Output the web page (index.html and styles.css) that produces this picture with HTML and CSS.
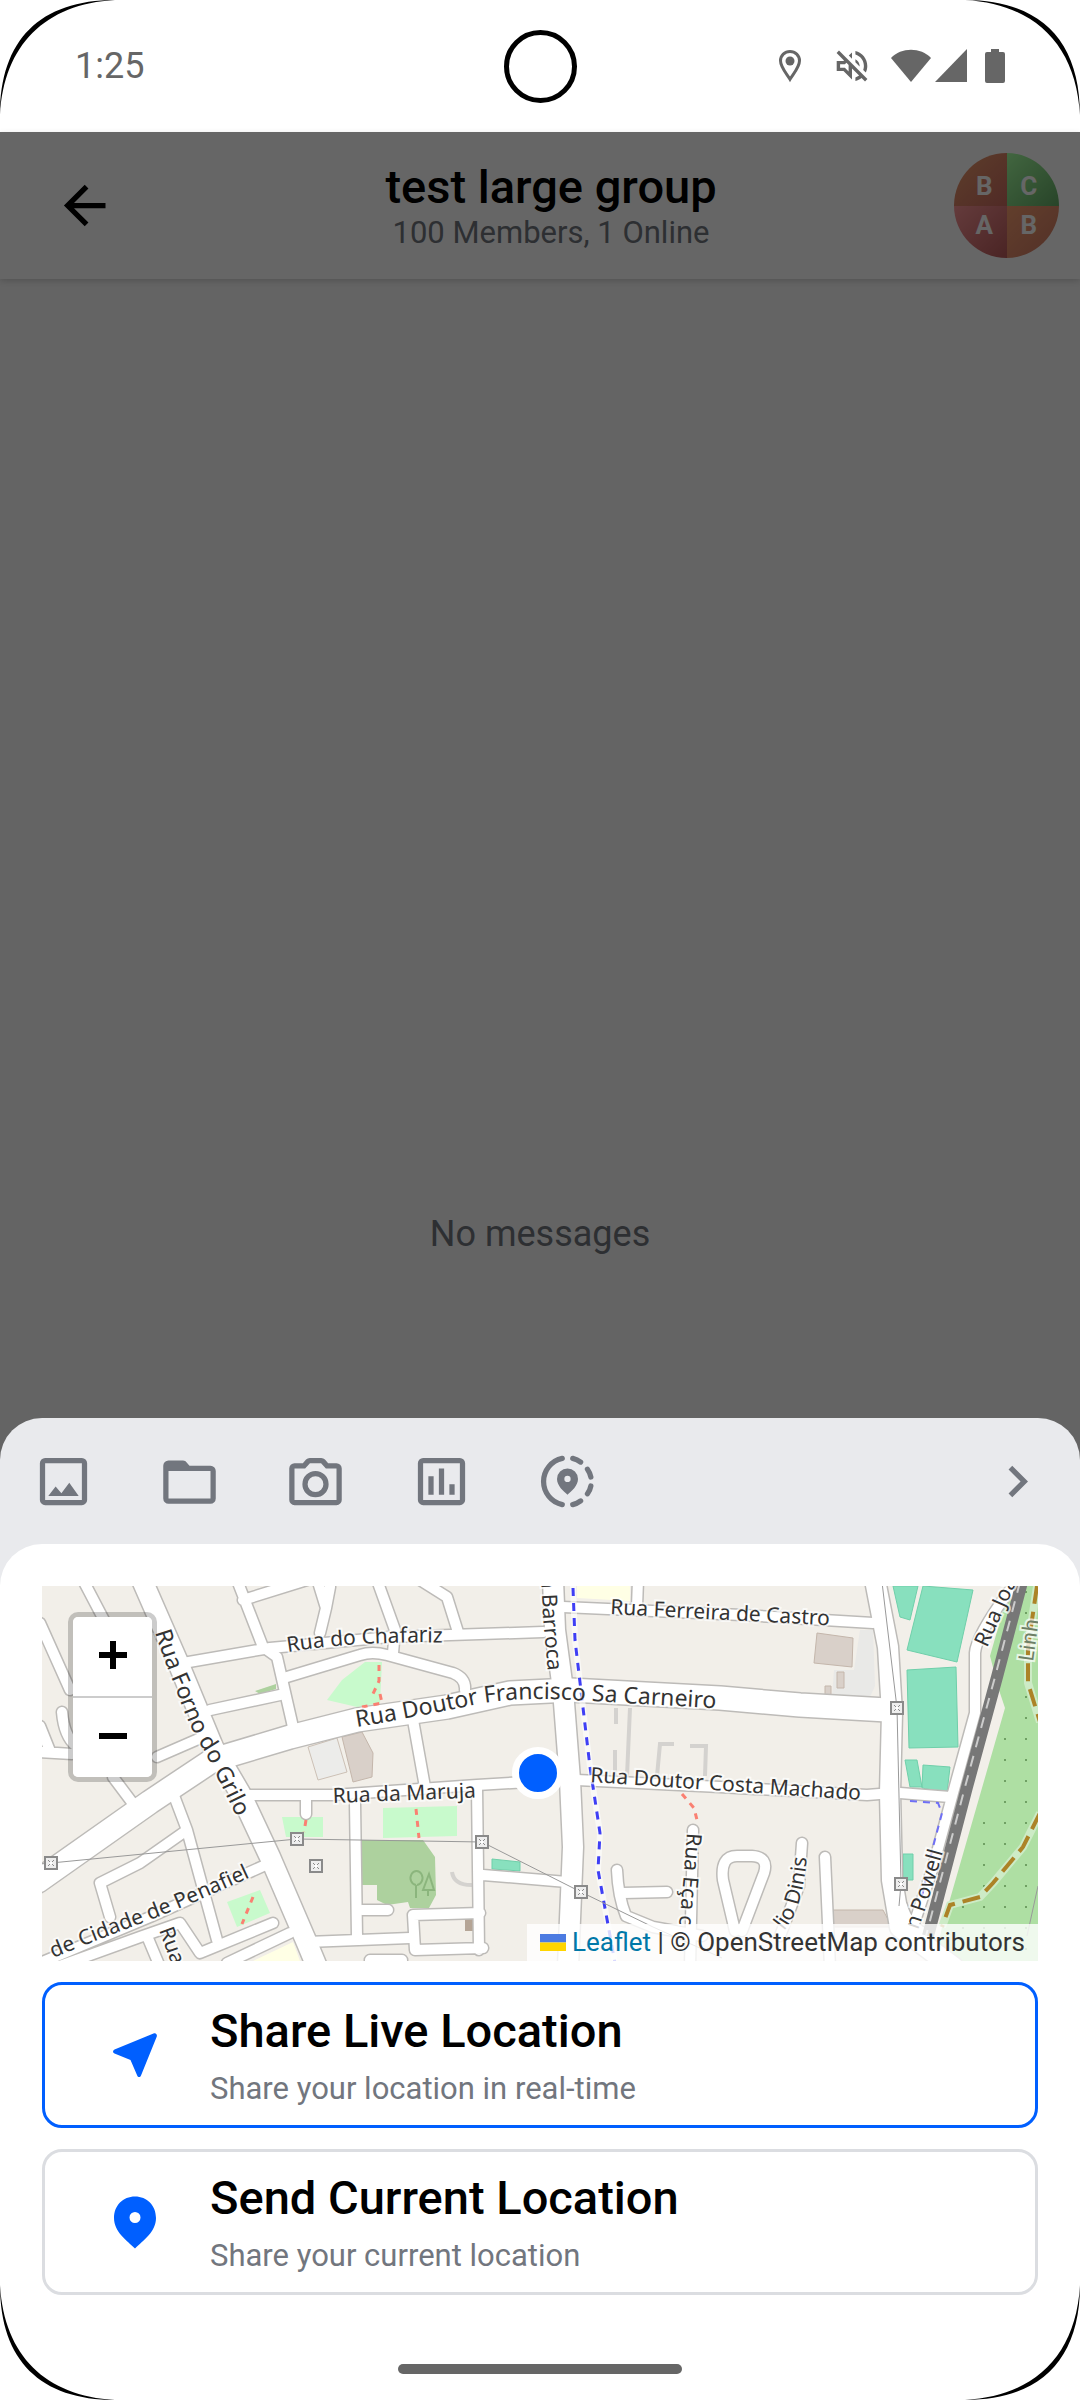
FILE: index.html
```
<!DOCTYPE html>
<html lang="en">
<head>
  <meta charset="UTF-8">
  <meta name="viewport" content="width=device-width, initial-scale=1">
  <title>test large group</title>
  <link rel="stylesheet" href="styles.css">
</head>
<body>
  <div class="phone">
    <div class="status-bar">
      <span class="clock">1:25</span>
      <span class="camera"></span>
      <div class="status-icons">
        <svg width="24" height="34" viewBox="0 0 24 34"><path d="M12 2.500c5.300 0 9.500 4 9.500 9.300 0 6.500-6.500 13.500-9.500 18.500-3-5-9.500-12-9.500-18.500C2.500 6.500 6.700 2.500 12 2.500z" fill="none" stroke="#666" stroke-width="3"/><circle cx="12" cy="12" r="4.500"/></svg>
        <svg class="muted" width="34" height="34" viewBox="2 2 20 20"><path d="M4.340 2.930L2.930 4.340 7.290 8.700 7 9H3v6h4l5 5v-6.590l4.180 4.180c-.65.49-1.380.88-2.180 1.110v2.060c1.340-.3 2.570-.92 3.610-1.750l2.050 2.050 1.410-1.410L4.340 2.930zM10 15.170L7.830 13H5v-2h2.830l.88-.88L10 11.410v3.760zM19 12c0 .82-.15 1.610-.41 2.340l1.530 1.530c.56-1.170.88-2.480.88-3.870 0-4.280-2.990-7.860-7-8.770v2.060c2.890.86 5 3.540 5 6.710zm-7-8l-1.880 1.880L12 7.760zm4.500 8c0-1.770-1.020-3.290-2.500-4.030v1.790l2.480 2.480c.01-.08.02-.16.02-.24z"/></svg>
        <svg class="wifi" width="40" height="34" viewBox="0 0 40 34"><path d="M20 33L0 9C10-2 30-2 40 9z"/></svg>
        <svg class="signal" width="32" height="34" viewBox="0 0 32 34"><path d="M32 0v33H0z"/></svg>
        <svg class="battery" width="20" height="34" viewBox="0 0 20 34"><path d="M6 0h8v3h4a2 2 0 0 1 2 2v27a2 2 0 0 1-2 2H2a2 2 0 0 1-2-2V5a2 2 0 0 1 2-2h4z"/></svg>
      </div>
    </div>

    <div class="screen">
      <div class="chat">
        <header class="chat-header">
          <button class="back" aria-label="Back">
            <svg width="63" height="63" viewBox="0 0 24 24"><path d="M20 11v2H8l5.500 5.500-1.420 1.420L4.160 12l7.920-7.920L13.500 5.500 8 11h12z"/></svg>
          </button>
          <div class="chat-title">
            <h1>test large group</h1>
            <p>100 Members, 1 Online</p>
          </div>
          <div class="avatar">
            <span class="tl">B</span>
            <span class="tr">C</span>
            <span class="bl">A</span>
            <span class="br">B</span>
          </div>
        </header>
        <div class="messages">No messages</div>
      </div>

      <div class="sheet">
        <div class="toolbar">
          <button aria-label="Photos"><svg viewBox="0 0 24 24"><path d="M19 19H5V5h14m0-2H5a2 2 0 0 0-2 2v14a2 2 0 0 0 2 2h14a2 2 0 0 0 2-2V5a2 2 0 0 0-2-2M14.200 12.500l-3 4-2.200-2.600L6.200 17.500h11.600z"/></svg></button>
          <button aria-label="Files"><svg viewBox="0 0 24 24"><path d="M20 18.500H4V8h16m0-2h-8l-1.500-1.700A2 2 0 0 0 9.500 4H4a2 2 0 0 0-2 2v12.500a2 2 0 0 0 2 2h16a2 2 0 0 0 2-2V8a2 2 0 0 0-2-2z"/></svg></button>
          <button aria-label="Camera"><svg viewBox="0 0 24 24"><path d="M20 5h-3.170L15.600 3.600A2 2 0 0 0 14.200 3H9.800a2 2 0 0 0-1.400.6L7.170 5H4a2 2 0 0 0-2 2v12a2 2 0 0 0 2 2h16a2 2 0 0 0 2-2V7a2 2 0 0 0-2-2m0 14H4V7h4.050l1.830-2h4.240l1.830 2H20zM12 8a5 5 0 0 0 0 10 5 5 0 0 0 0-10m0 8a3 3 0 0 1 0-6 3 3 0 0 1 0 6z"/></svg></button>
          <button aria-label="Poll"><svg viewBox="0 0 24 24"><path d="M9 17H7v-7h2zm4 0h-2V7h2zm4 0h-2v-4h2zm2 2H5V5h14m0-2H5a2 2 0 0 0-2 2v14a2 2 0 0 0 2 2h14a2 2 0 0 0 2-2V5a2 2 0 0 0-2-2z"/></svg></button>
          <button aria-label="Location"><svg viewBox="0 0 24 24"><path d="M10 3.200A9 9 0 0 0 10 20.800M14 3.200Q15.700 3.600 17 4.600M19.600 7.300Q20.600 8.700 20.900 10.300M20.900 13.700Q20.600 15.300 19.600 16.700M17 19.400Q15.700 20.400 14 20.800" fill="none" stroke="#72767e" stroke-width="2" stroke-linecap="round"/><path d="M12 7a4 4 0 0 0-4 4c0 2.600 2.500 4.700 4 6 1.500-1.300 4-3.400 4-6a4 4 0 0 0-4-4m0 5.200a1.200 1.200 0 0 1 0-2.400 1.200 1.200 0 0 1 0 2.400z"/></svg></button>
          <button class="more" aria-label="More"><svg viewBox="0 0 24 24"><path d="M8.590 16.580L13.170 12 8.590 7.410 10 6l6 6-6 6z"/></svg></button>
        </div>

        <div class="sheet-body">
          <div class="map">
            <svg class="tiles" viewBox="0 0 996 375" preserveAspectRatio="xMidYMid slice">
              <defs>
                <g id="roads">
                  <!-- side streets -->
                  <g class="road-s">
                    <path d="M41-6L62 34 71 57M71 191L92 219M-2 37L28 104M-2 140L8 165M-2 166L30 168M20 126Q22 150 34 160"/>
                    <path d="M195-6L221 61 235 71 251 141M201 14L265-6M288 1L284 22 278 47M276-4L284 22"/>
                    <path d="M141 77L228 62 348 51 408 49 501 46"/>
                    <path d="M245 91L318 69Q330 65 345 69L411 87Q424 92 423 104M335-6L353 44 351 67M378-6L405 11 416 46"/>
                    <path d="M168 124L238 109M115 171L161 151"/>
                    <path d="M208 209L291 209 435 199 518 194M535 194L678 201 825 209 850 207"/>
                    <path d="M264 211V228M313 217L315 351M265 356L368 352M131 207L145 244 175 354M145 244L98 277 58 297 68 331"/>
                    <path d="M-2 377L108 331 228 277M231 337L158 367 138 337 98 351 15 381M248 347L185 377M105 350L118 381"/>
                    <path d="M371 134L383 201M435 201L437 364M441 289L525 296M438 327L371 329 373 364 441 362M320 324H346M328 374H360"/>
                    <path d="M521 21L700 29 831 37M596-6L595 21M575 284Q576 310 584 330L611 341 660 350M581 307L625 306M651 244L648 381"/>
                    <path d="M693 345L681 294Q678 270 695 270H710Q727 271 722 287L700 345M760 257L757 300 738 350M783 271L788 381"/>
                    <path d="M968 4Q934 50 933 67L933 127 911 207 891 281 868 350M858 207L908 211M860 320Q866 340 880 346"/>
                  </g>
                  <!-- main streets -->
                  <g class="road-m">
                    <path d="M511-6L513 44 521 104 528 194 531 261 526 381"/>
                    <path d="M100-6L135 74 171 161 198 207 228 271 265 357 275 381"/>
                    <path d="M833-6L846 61 850 127 848 207 850 294 858 341 911 381"/>
                  </g>
                  <g class="road-l">
                    <path d="M-4 295L108 216 171 174 248 151 315 134 405 121 468 107 528 104 678 112 758 119 845 124"/>
                  </g>
                </g>
                <g id="pylon"><rect x="-6" y="-6" width="12" height="12" fill="#eee" stroke="#8a8a8a" stroke-width="2"/><path d="M-3-3L3 3M3-3L-3 3" stroke="#8a8a8a"/><circle r="1.500" fill="#fff"/></g>
                <pattern id="trees" width="21" height="21" patternUnits="userSpaceOnUse" x="961" y="4"><rect width="21" height="21" fill="#aedfa3"/><rect x="1" y="1" width="2" height="2" fill="#6fa063"/></pattern>
                <path id="t-forno" d="M113 46Q124 80 133 100Q146 140 162 164L210 262"/>
                <path id="t-chafariz" d="M246 66Q320 54 420 57"/>
                <path id="t-carneiro" d="M315 141Q370 132 441 117Q480 111 530 114Q600 118 720 125"/>
                <path id="t-ferreira" d="M568 28L840 42"/>
                <path id="t-maruja" d="M291 217L450 211"/>
                <path id="t-costa" d="M548 196L850 216"/>
                <path id="t-cidade" d="M11 372Q60 352 108 334Q160 314 230 281"/>
                <path id="t-rua" d="M117 344L132 385"/>
                <path id="t-barroca" d="M499-9L501 30 508 110"/>
                <path id="t-eca" d="M645 247Q642 290 636 350"/>
                <path id="t-dinis" d="M742 345Q764 320 766 250"/>
                <path id="t-joao" d="M945 62L978-12"/>
                <path id="t-powell" d="M876 344Q892 300 905 250"/>
                <path id="t-linha" d="M991 76L1000 10"/>
              </defs>

              <rect width="996" height="375" fill="#f2efe9"/>
              <!-- parks, pitches, buildings -->
              <path fill="#c8facc" d="M285 114L300 94 323 76H340L338 117 315 121zM240 231H281V251H244zM185 316L218 304 228 327 195 341zM341 222L415 220V250L341 252z"/>
              <path fill="#add19e" d="M320 254H381L393 271 394 309 387 322H368L366 316 345 319 335 314V299H320zM213 105L234 98V103L218 108z"/>
              <path fill="none" stroke="#8bb57d" stroke-width="2" d="M374 312V299M374 299a6 7 0 1 1 1 0M386 310V303M381 304L387 288 392 304z"/>
              <path fill="#ffffe5" d="M535 0H588V15L535 12zM211 375L251 356 258 375z"/>
              <path fill="#ececea" stroke="#ccc0b5" d="M266 161L295 152 305 186 276 194z"/>
              <path fill="#e9e9e7" d="M818 44H831L833 100 828 111H790L792 84H812z"/>
              <path fill="#d9d0c9" stroke="#c4b6ab" d="M300 151L320 146 331 167 330 191 311 196zM775 47L811 52 810 81 772 77zM791 324H841L850 341H791zM795 86H802V102H795zM783 100H789V109H783z"/>
              <rect x="423" y="333" width="10" height="12" fill="#b5a596"/>
              <path fill="#88e0be" stroke="#6fcfaa" d="M851 0H876L868 34 858 31zM881 0L931 4 915 76 865 64zM865 84L914 81 916 161 867 162zM863 174H875L880 201H868zM881 179L908 181 905 207 880 202zM861 268H871V294H861zM450 273L478 276V285L450 283z"/>
              <path fill="#aedfa3" d="M968 0H996V375H893L900 341 963 122 957 104 948 70z"/>
              <path fill="url(#trees)" d="M982 0H996V375H905L912 341 969 122 966 80z"/>

              <path fill="none" stroke="#d4d2cf" stroke-width="4" d="M574 122V138M573 164V190M588 122L585 190M615 190L618 158H632M648 160H664L663 190M410 286Q412 300 432 299"/>
              <use href="#roads" class="casing"/>
              <use href="#roads" class="fill"/>

              <!-- railway -->
              <path fill="none" stroke="#777" stroke-width="12" d="M980-4L955 91 925 201 886 350"/>
              <path fill="none" stroke="#ccc" stroke-width="2" stroke-dasharray="11 9" d="M978-4L953 91 923 201 884 350"/>
              <!-- trails -->
              <g fill="none">
                <path stroke="#cdebc6" stroke-width="8" d="M995 0L986 61V97L998 136M998 227L981 261 951 297 938 311 908 319 900 341"/>
                <path stroke="#ac8327" stroke-width="4" stroke-dasharray="18 8" d="M995 0L986 61V97L998 136M998 227L981 261 951 297 938 311 908 319 900 341"/>
                <path stroke="#fff" stroke-opacity=".6" stroke-width="6" d="M531 0L533 54 548 181 558 247 556 284 573 377"/>
                <path stroke="#3f3ff5" stroke-width="3" stroke-dasharray="8 7" d="M531 2L533 54 548 181 558 247 556 284 573 377"/>
                <path stroke="#6f6ff5" stroke-width="2" stroke-dasharray="7 6" d="M868 215L896 217 900 227 891 261 880 310"/>
                <path stroke="#fa8072" stroke-width="3" stroke-dasharray="6 6" d="M337 79V95L330 110M338 108L340 117 320 121M264 234L262 246M211 311L200 338M374 223L377 252M640 208L652 222 656 238"/>
                <path stroke="#999" d="M-2 278L9 277 255 253 440 256 539 306 611 341 680 372M840-4L855 122 859 298 857 320M996 300L985 350"/>
              </g>
              <use href="#pylon" x="9" y="277"/>
              <use href="#pylon" x="255" y="253"/>
              <use href="#pylon" x="274" y="280"/>
              <use href="#pylon" x="440" y="256"/>
              <use href="#pylon" x="539" y="306"/>
              <use href="#pylon" x="855" y="122"/>
              <use href="#pylon" x="859" y="298"/>

              <g class="street-names">
                <text><textPath href="#t-chafariz">Rua do Chafariz</textPath></text>
                <text><textPath href="#t-ferreira">Rua Ferreira de Castro</textPath></text>
                <text><textPath href="#t-maruja">Rua da Maruja</textPath></text>
                <text><textPath href="#t-costa">Rua Doutor Costa Machado</textPath></text>
                <text><textPath href="#t-cidade">de Cidade de Penafiel</textPath></text>
                <text><textPath href="#t-rua">Rua</textPath></text>
                <text><textPath href="#t-eca">Rua Eça c</textPath></text>
                <text><textPath href="#t-dinis">lio Dinis</textPath></text>
                <text><textPath href="#t-joao">Rua Joã</textPath></text>
                <text><textPath href="#t-powell">n Powell</textPath></text>
                <text class="faint"><textPath href="#t-linha">Linh</textPath></text>
                <text class="big"><textPath href="#t-forno">Rua Forno do Grilo</textPath></text>
                <text class="big"><textPath href="#t-carneiro">Rua Doutor Francisco Sa Carneiro</textPath></text>
                <text><textPath href="#t-barroca">a Barroca</textPath></text>
              </g>
            </svg>

            <span class="marker"></span>

            <div class="zoom">
              <button aria-label="Zoom in"><svg width="28" height="28" viewBox="0 0 28 28"><path d="M11 0h6v11h11v6H17v11h-6V17H0v-6h11z"/></svg></button>
              <button aria-label="Zoom out"><svg width="28" height="28" viewBox="0 0 28 28"><path d="M0 11h28v6H0z"/></svg></button>
            </div>

            <div class="attribution">
              <a href="#"><svg width="26" height="17" viewBox="0 0 12 8" preserveAspectRatio="none"><path fill="#4c7be1" d="M0 0h12v4H0z"/><path fill="#ffd500" d="M0 4h12v4H0z"/></svg> Leaflet</a> | © OpenStreetMap contributors
            </div>
          </div>

          <button class="option active">
            <svg width="63" height="63" viewBox="0 0 63 63"><path d="M50.500 9.500c2-.8 4 .8 3.300 3L38 51.500c-.8 2-3 2-3.800 0L27.500 36 11.500 29.500c-2-.8-2-3 0-4z"/></svg>
            <span class="option-text">
              <span class="option-title">Share Live Location</span>
              <span class="option-sub">Share your location in real-time</span>
            </span>
          </button>
          <button class="option">
            <svg width="63" height="63" viewBox="0 0 63 63"><path d="M32 5.500c-12 0-21 9-21 21.500 0 14 13 22.500 21 30.500 8-8 21-16.500 21-30.500 0-12.500-9-21.500-21-21.500m0 26.500a5.500 5.500 0 0 1 0-11 5.500 5.500 0 0 1 0 11z"/></svg>
            <span class="option-text">
              <span class="option-title">Send Current Location</span>
              <span class="option-sub">Share your current location</span>
            </span>
          </button>
        </div>

        <div class="home-bar"><span></span></div>
      </div>
    </div>

    <!-- rounded corners of the device -->
    <svg class="corner top left" viewBox="0 0 115 115"><path fill="#fff" d="M0 0H115C40 0 0 40 0 115z"/><path d="M0 115C0 40 40 0 115 0C45 4 4 45 0 115z"/></svg>
    <svg class="corner top right" viewBox="0 0 115 115"><path fill="#fff" d="M0 0H115C40 0 0 40 0 115z"/><path d="M0 115C0 40 40 0 115 0C45 4 4 45 0 115z"/></svg>
    <svg class="corner bottom left" viewBox="0 0 115 115"><path fill="#fff" d="M0 0H115C40 0 0 40 0 115z"/><path d="M0 115C0 40 40 0 115 0C45 4 4 45 0 115z"/></svg>
    <svg class="corner bottom right" viewBox="0 0 115 115"><path fill="#fff" d="M0 0H115C40 0 0 40 0 115z"/><path d="M0 115C0 40 40 0 115 0C45 4 4 45 0 115z"/></svg>
  </div>
</body>
</html>
```
FILE: styles.css
```
* {
  box-sizing: border-box;
}
body {
  margin: 0;
  background-color: #fff;
  font-family: Roboto, "Liberation Sans", sans-serif;
  color: #000;
}
button {
  margin: 0;
  padding: 0;
  border: none;
  background: none;
  font: inherit;
  color: inherit;
}
svg {
  display: block;
}
.phone {
  position: relative;
  display: flex;
  flex-direction: column;
  min-height: 100vh;
}

/* status bar */
.status-bar {
  display: grid;
  grid-template-columns: 1fr auto 1fr;
  align-items: center;
  height: 132px;
  padding: 0 75px;
}
.clock {
  font-size: 36px;
  line-height: 44px;
  color: #666;
}
.camera {
  width: 73px;
  height: 73px;
  border: 5px solid #000;
  border-radius: 50%;
}
.status-icons {
  display: flex;
  justify-content: flex-end;
  align-items: center;
  fill: #666;
}
.muted {
  margin-left: 33px;
}
.wifi {
  margin-left: 22px;
}
.signal {
  margin-left: 4px;
}
.battery {
  margin-left: 18px;
}

/* chat and sheet share one cell, the sheet sits at the bottom */
.screen {
  display: grid;
  flex: 1;
}
.chat,
.sheet {
  grid-area: 1 / 1;
}
.chat {
  position: relative;
  display: flex;
  flex-direction: column;
  background-color: #f9f9f9;
}
.chat::after {
  content: "";
  position: absolute;
  inset: 0;
  background-color: rgba(0, 0, 0, 0.6);
}
.chat-header {
  display: grid;
  grid-template-columns: 1fr auto 1fr;
  align-items: center;
  height: 147px;
  padding: 0 21px 0 53px;
  background-color: #fff;
  box-shadow: 0 2px 6px rgba(0, 0, 0, 0.16);
}
.back {
  justify-self: start;
}
.chat-title {
  margin-left: -10px;
  text-align: center;
}
.chat-title h1 {
  margin: 0;
  font-size: 47px;
  line-height: 55px;
  font-weight: 500;
}
.chat-title p {
  margin: 0;
  font-size: 31px;
  line-height: 38px;
  color: #72767e;
}
.avatar {
  display: grid;
  grid-template-columns: 1fr 1fr;
  grid-template-rows: 1fr 1fr;
  justify-self: end;
  width: 105px;
  height: 105px;
  border-radius: 50%;
  overflow: hidden;
  font-size: 26px;
  line-height: 38px;
  font-weight: 700;
  color: #fff;
  text-align: center;
}
.avatar .tl {
  padding: 14px 0 0 8px;
  background: linear-gradient(135deg, #eb9d6b, #c8695f);
}
.avatar .tr {
  padding: 14px 8px 0 0;
  background: linear-gradient(135deg, #a5ffa0, #64aa66);
}
.avatar .bl {
  padding: 0 0 14px 8px;
  background: linear-gradient(135deg, #fa9496, #b95a5a);
}
.avatar .br {
  padding: 0 8px 14px 0;
  background: linear-gradient(135deg, #f59d6e, #cd7864);
}
.messages {
  display: flex;
  flex: 1;
  align-items: center;
  justify-content: center;
  padding-bottom: 212px;
  font-size: 36px;
  line-height: 44px;
  color: #72767e;
}

/* attachment sheet */
.sheet {
  z-index: 1;
  align-self: end;
  border-radius: 42px 42px 0 0;
  background-color: #e9eaed;
}
.toolbar {
  display: flex;
  height: 126px;
}
.toolbar button {
  display: flex;
  align-items: center;
  justify-content: center;
  width: 126px;
}
.toolbar svg {
  width: 63px;
  height: 63px;
  fill: #72767e;
}
.toolbar .more {
  margin-left: auto;
}
.sheet-body {
  display: flex;
  flex-direction: column;
  gap: 21px;
  padding: 42px 42px 0;
  border-radius: 42px 42px 0 0;
  background-color: #fff;
}

/* map */
.map {
  position: relative;
  height: 375px;
  overflow: hidden;
}
.tiles {
  width: 100%;
  height: 100%;
}
.casing {
  --case: 3px;
  stroke: #bdbbb8;
}
.fill {
  --case: 0px;
  stroke: #fff;
}
#roads {
  fill: none;
  stroke-linecap: round;
  stroke-linejoin: round;
}
.road-s {
  stroke-width: calc(10px + var(--case));
}
.road-m {
  stroke-width: calc(20px + var(--case));
}
.road-l {
  stroke-width: calc(23px + var(--case));
}
.street-names {
  font-family: "Noto Sans", sans-serif;
  font-size: 21px;
  fill: #333;
  stroke: #fff;
  stroke-opacity: 0.7;
  stroke-width: 4px;
  paint-order: stroke;
}
.street-names .big {
  font-size: 23px;
}
.street-names .faint {
  fill: #6d7f66;
}
.marker {
  position: absolute;
  top: 50%;
  left: 50%;
  width: 52px;
  height: 52px;
  margin: -27px 0 0 -28px;
  border: 7px solid #fff;
  border-radius: 50%;
  background-color: #005fff;
}
.zoom {
  position: absolute;
  top: 26px;
  left: 26px;
  border: 5px solid rgba(0, 0, 0, 0.2);
  border-radius: 10px;
  background-clip: padding-box;
}
.zoom button {
  display: flex;
  align-items: center;
  justify-content: center;
  width: 79px;
  height: 79px;
  padding-bottom: 4px;
  background-color: #fff;
}
.zoom button:first-child {
  height: 81px;
  border-bottom: 2px solid #ccc;
  border-radius: 5px 5px 0 0;
}
.zoom button:last-child {
  border-radius: 0 0 5px 5px;
}
.attribution {
  position: absolute;
  right: 0;
  bottom: 0;
  padding: 0 13px;
  font-size: 26px;
  line-height: 37px;
  color: #333;
  background-color: rgba(255, 255, 255, 0.8);
}
.attribution a {
  color: #0078a8;
  text-decoration: none;
}
.attribution svg {
  display: inline-block;
}

/* share options */
.option {
  display: flex;
  align-items: center;
  gap: 44px;
  height: 146px;
  padding: 0 58px;
  border: 3px solid #dbdde1;
  border-radius: 20px;
  text-align: left;
}
.option.active {
  border-color: #005fff;
}
.option svg {
  fill: #005fff;
}
.option-text {
  display: flex;
  flex-direction: column;
  gap: 12px;
}
.option-title {
  font-size: 47px;
  line-height: 55px;
  font-weight: 500;
}
.option-sub {
  font-size: 31px;
  line-height: 38px;
  color: #72767e;
}
.home-bar {
  display: flex;
  align-items: flex-end;
  justify-content: center;
  height: 105px;
  padding-bottom: 26px;
  background-color: #fff;
}
.home-bar span {
  width: 284px;
  height: 10px;
  border-radius: 5px;
  background-color: #666;
}

.corner {
  position: absolute;
  z-index: 2;
  width: 115px;
  height: 115px;
}
.corner.top {
  top: 0;
}
.corner.bottom {
  bottom: 0;
}
.corner.left {
  left: 0;
}
.corner.right {
  right: 0;
}
.top.right {
  transform: scaleX(-1);
}
.bottom.left {
  transform: scaleY(-1);
}
.bottom.right {
  transform: scale(-1);
}
```
